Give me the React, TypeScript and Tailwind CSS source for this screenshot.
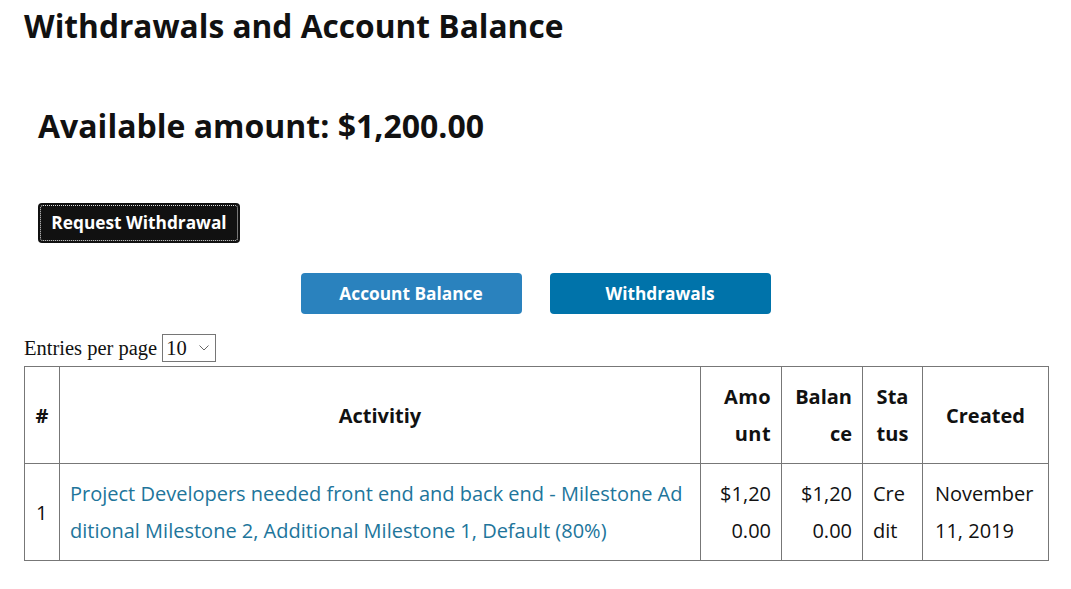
import React from "react";

export default function App() {
  const sans = { fontFamily: '"Open Sans", "Noto Sans", sans-serif' };
  return (
    <div className="bg-white text-[#111] min-h-[589px] px-[24px]" style={sans}>
      <h1 className="text-[31.7px] font-bold leading-[40px] pt-[6px]">Withdrawals and Account Balance</h1>
      <h2 className="text-[32px] font-bold leading-[40px] mt-[60px] ml-[14px]">Available amount: $1,200.00</h2>
      <div className="mt-[57px] ml-[14px]">
        <button className="bg-[#111] text-white text-[17.3px] font-bold rounded-[4px] h-[40px] w-[202px] p-[2px]">
          <span className="flex items-center justify-center w-full h-full border border-dotted border-[#ddd] rounded-[3px]">Request Withdrawal</span>
        </button>
      </div>
      <div className="flex justify-center gap-[28px] mt-[30px]">
        <button className="bg-[#2a82be] text-white text-[17.3px] font-bold rounded-[4px] h-[41px] w-[221px]">Account Balance</button>
        <button className="bg-[#0073aa] text-white text-[17.3px] font-bold rounded-[4px] h-[41px] w-[221px]">Withdrawals</button>
      </div>
      <div className="mt-[20px] flex items-center h-[28px]" style={{ fontFamily: '"Liberation Serif", serif' }}>
        <span className="text-[20.5px]">Entries per page</span>
        <div className="ml-[5px] w-[54px] h-[28px] border border-[#767676] flex items-center justify-between pl-[3px] pr-[6px] text-[20.5px]">
          <span>10</span>
          <svg width="10" height="6" viewBox="0 0 10 6" fill="none" stroke="#666" strokeWidth="1"><path d="M0.5 0.5 L5 5 L9.5 0.5" /></svg>
        </div>
      </div>
      <table className="table-fixed border-collapse mt-[4px] w-[1024px] text-[20px] leading-[37px]">
        <colgroup>
          <col className="w-[35px]" />
          <col className="w-[641px]" />
          <col className="w-[81px]" />
          <col className="w-[81px]" />
          <col className="w-[60px]" />
          <col className="w-[126px]" />
        </colgroup>
        <thead>
          <tr className="h-[97px]">
            <th className="border border-[#777] px-[10px] font-bold text-center">#</th>
            <th className="border border-[#777] px-[10px] font-bold text-center">Activitiy</th>
            <th className="border border-[#777] px-[10px] font-bold text-right break-all tracking-[0.4px]">Amount</th>
            <th className="border border-[#777] px-[10px] font-bold text-right break-all">Balance</th>
            <th className="border border-[#777] px-[10px] font-bold text-center break-all">Status</th>
            <th className="border border-[#777] px-[10px] font-bold text-center">Created</th>
          </tr>
        </thead>
        <tbody>
          <tr className="h-[97px]">
            <td className="border border-[#777] px-[10px] pl-[11px]">1</td>
            <td className="border border-[#777] px-[10px] break-all text-[#21759b]">Project Developers needed front end and back end - Milestone Additional Milestone 2, Additional Milestone 1, Default (80%)</td>
            <td className="border border-[#777] px-[10px] text-right break-all">$1,200.00</td>
            <td className="border border-[#777] px-[10px] text-right break-all">$1,200.00</td>
            <td className="border border-[#777] px-[10px] break-all">Credit</td>
            <td className="border border-[#777] px-[10px] pl-[12px]">November 11, 2019</td>
          </tr>
        </tbody>
      </table>
    </div>
  );
}
